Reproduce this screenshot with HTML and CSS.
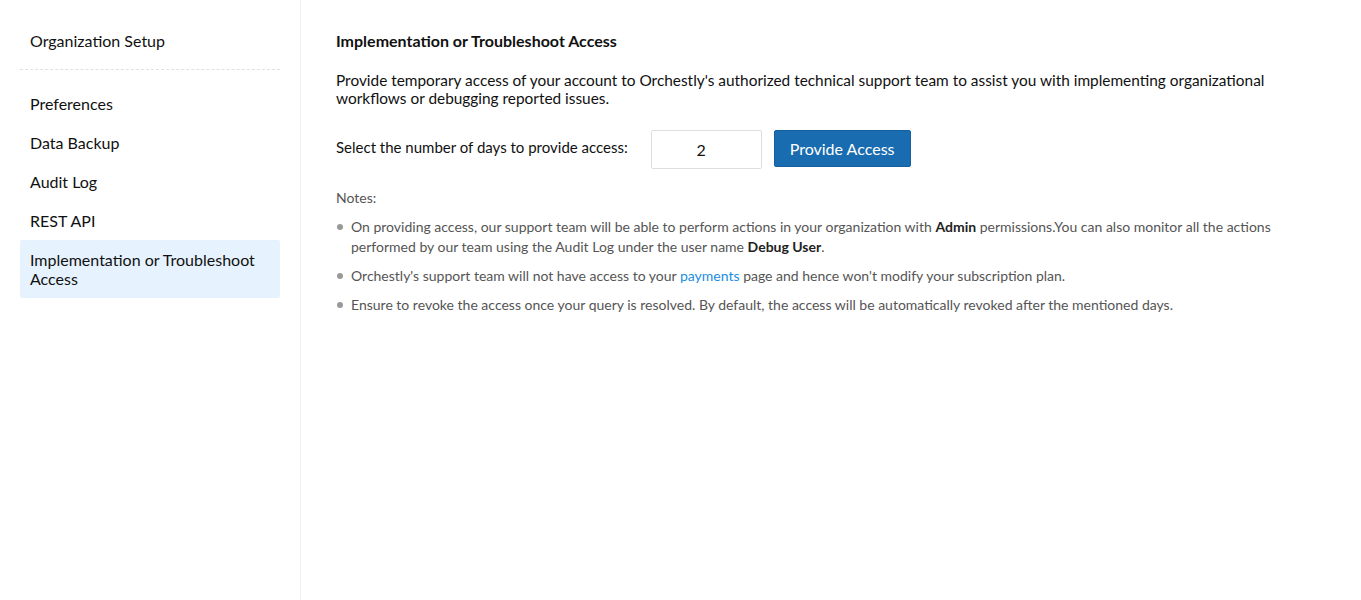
FILE: index.html
```html
<!DOCTYPE html>
<html>
<head>
<meta charset="utf-8">
<link rel="stylesheet" href="styles.css">
</head>
<body>
<div class="page">
  <aside class="sidebar">
    <div class="nav-item top">Organization Setup</div>
    <div class="divider"></div>
    <div class="nav-item">Preferences</div>
    <div class="nav-item">Data Backup</div>
    <div class="nav-item">Audit Log</div>
    <div class="nav-item">REST API</div>
    <div class="nav-item active">Implementation or Troubleshoot Access</div>
  </aside>
  <main class="main">
    <h1 class="title">Implementation or Troubleshoot Access</h1>
    <p class="intro">Provide temporary access of your account to Orchestly's authorized technical support team to assist you with implementing organizational workflows or debugging reported issues.</p>
    <div class="access-row">
      <label class="access-label">Select the number of days to provide access:</label>
      <input class="days-input" type="text" value="2">
      <button class="btn-primary">Provide Access</button>
    </div>
    <div class="notes">
      <div class="notes-title">Notes:</div>
      <ul class="notes-list">
        <li>On providing access, our support team will be able to perform actions in your organization with <b>Admin</b> permissions.You can also monitor all the actions performed by our team using the Audit Log under the user name <b>Debug User</b>.</li>
        <li>Orchestly's support team will not have access to your <a class="link">payments</a> page and hence won't modify your subscription plan.</li>
        <li>Ensure to revoke the access once your query is resolved. By default, the access will be automatically revoked after the mentioned days.</li>
      </ul>
    </div>
  </main>
</div>
</body>
</html>
```
FILE: styles.css
```css
* { box-sizing: border-box; }
html, body {
  margin: 0;
  padding: 0;
  background: #fff;
  font-family: Lato, "Open Sans", "Liberation Sans", sans-serif;
  color: #111;
}
.page {
  display: flex;
  min-height: 600px;
}
.sidebar {
  width: 301px;
  flex: 0 0 301px;
  border-right: 1px solid #efefef;
  padding: 21px 20px 20px 20px;
}
.nav-item {
  font-size: 16px;
  line-height: 19px;
  padding: 10px 10px;
  border-radius: 2px;
  color: #111;
}
.divider {
  border-top: 1px dashed #e0e0e0;
  margin: 9px 0 14px 0;
}
.nav-item.active {
  background: #e6f3fe;
}
.main {
  flex: 1;
  padding: 31px 36px 20px 35px;
}
.title {
  font-size: 16px;
  font-weight: 700;
  line-height: 19px;
  margin: 0 0 21px 0;
  color: #111;
}
.intro {
  font-size: 15.4px;
  line-height: 18px;
  margin: 0 0 23px 0;
  color: #111;
  max-width: 960px;
}
.access-row {
  display: flex;
  align-items: flex-start;
}
.access-label {
  font-size: 15px;
  line-height: 19px;
  margin-top: 8px;
  margin-right: 23px;
  color: #111;
}
.days-input {
  width: 111px;
  height: 39px;
  border: 1px solid #ddd;
  border-radius: 2px;
  font-family: inherit;
  font-size: 16px;
  text-align: center;
  color: #111;
  padding: 0 10px 0 0;
  margin: 0 12px 0 0;
  outline: none;
}
.btn-primary {
  height: 37px;
  padding: 0 15px;
  border: 1px solid #14609f;
  border-radius: 2px;
  background: #1a6cb0;
  color: #fff;
  font-family: inherit;
  font-size: 16px;
  margin: 0;
}
.notes {
  margin-top: 19px;
  font-size: 14px;
  color: #555;
}
.notes-title {
  line-height: 20px;
  margin-bottom: 9px;
}
.notes-list {
  list-style: none;
  margin: 0;
  padding: 0;
}
.notes-list li {
  position: relative;
  padding-left: 15px;
  line-height: 20px;
  margin-bottom: 9px;
}
.notes-list li::before {
  content: "";
  position: absolute;
  left: 1px;
  top: 7px;
  width: 6px;
  height: 6px;
  border-radius: 50%;
  background: #999;
}
.notes-list b {
  color: #222;
  font-weight: 700;
}
.link {
  color: #1b8ee3;
  text-decoration: none;
}
```
